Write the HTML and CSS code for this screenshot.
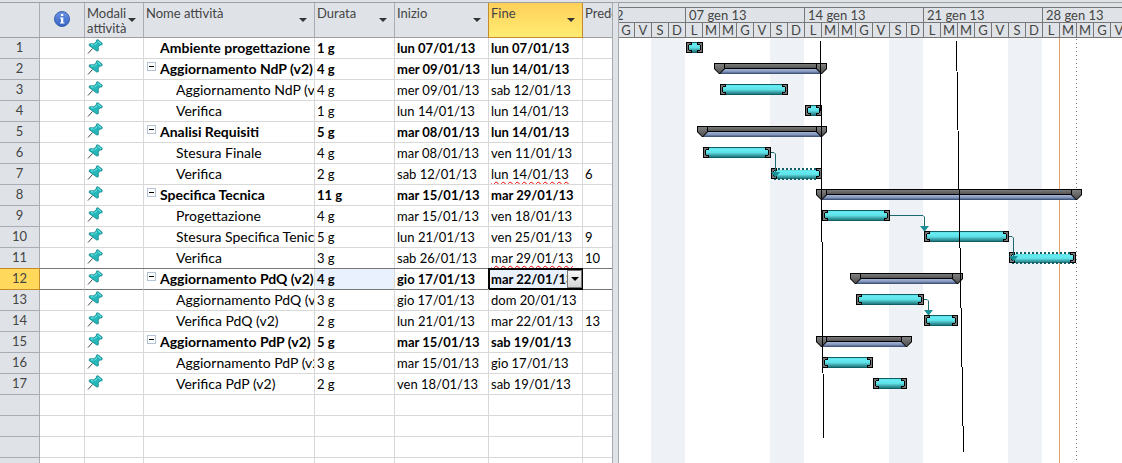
FILE: index.html
```
<!DOCTYPE html>
<html lang="it">
<head>
<meta charset="utf-8">
<title>Diagramma di Gantt</title>
<link rel="stylesheet" href="styles.css">
</head>
<body>
<svg class="defs" aria-hidden="true">
  <defs>
    <linearGradient id="teal" x1="0" y1="0" x2="0" y2="1">
      <stop offset="0" stop-color="#5fdbe2"/><stop offset=".2" stop-color="#66ecf2"/><stop offset=".5" stop-color="#5fe0e7"/><stop offset=".75" stop-color="#3ba5aa"/><stop offset="1" stop-color="#1c6e74"/>
    </linearGradient>
    <linearGradient id="blue" x1="0" y1="0" x2="0" y2="1">
      <stop offset="0" stop-color="#a3b5d6"/><stop offset=".5" stop-color="#8497bb"/><stop offset="1" stop-color="#34466c"/>
    </linearGradient>
    <linearGradient id="grey" x1="0" y1="0" x2="0" y2="1">
      <stop offset="0" stop-color="#808080"/><stop offset="1" stop-color="#505050"/>
    </linearGradient>
    <linearGradient id="info" x1="0" y1="0" x2="0" y2="1">
      <stop offset="0" stop-color="#6d95e4"/><stop offset="1" stop-color="#3562c4"/>
    </linearGradient>
    <symbol id="pin" viewBox="0 0 16 16">
      <path d="M1 14.5L5.5 9.5" stroke="#444" stroke-width="1" fill="none"/>
      <path d="M9.5 1L11 .8L15.2 4.2L15 5.8L13.2 6L11.2 8L11.4 11.5L10 12.2L2 6.4L2.6 4.8L6.8 4.8L9.2 3Z" fill="#25b7ba" stroke="#13868b" stroke-width=".8"/>
      <path d="M10.5 2L14 4.8M7.5 5.8L10 3.8M4 5.8L6.5 6" stroke="#7deeee" stroke-width="1" fill="none"/>
    </symbol>
    <g id="cap">
      <path d="M0 0H6V3H3V8H6V11H0Z" fill="#000"/>
      <path d="M1 1H5V2H3V3H2V8H3V9H5V10H1Z" fill="#777"/>
    </g>
    <g id="cap-end"><use href="#cap" transform="scale(-1 1)"/></g>
    <g id="wedge">
      <path d="M0 0H11V6L6 11H5L0 6Z" fill="#000"/>
      <path d="M1 1H10V5.500L6 10H5L1 5.500Z" fill="url(#grey)"/>
    </g>
    <path id="arrow" d="M-4 0H5L1 5H0Z" fill="#1a8f96" stroke="none"/>
    <pattern id="weekend" width="119" height="40" x="32" y="0" patternUnits="userSpaceOnUse">
      <rect width="34" height="40" fill="#eef2f7"/>
    </pattern>
  </defs>
</svg>
<main class="project">
  <section class="sheet" aria-label="Elenco attività">
    <table class="tasks">
      <colgroup><col class="c-id"><col class="c-info"><col class="c-mode"><col class="c-name"><col class="c-dur"><col class="c-date"><col class="c-date"><col class="c-pred"></colgroup>
      <thead>
        <tr>
          <th class="corner"></th>
          <th class="info"><svg class="info-icon" viewBox="0 0 16 16" role="img" aria-label="Indicatori"><circle cx="8" cy="8" r="7.500" fill="url(#info)" stroke="#3a5fae"/><path d="M7 3h2.300v2H7zM6 6.500h3.300v5H10.500v1H6v-1h1v-4H6z" fill="#fff"/></svg></th>
          <th>Modali attività<button class="filter" aria-label="Filtra modalità"></button></th>
          <th>Nome attività<button class="filter" aria-label="Filtra nome"></button></th>
          <th>Durata<button class="filter" aria-label="Filtra durata"></button></th>
          <th>Inizio<button class="filter" aria-label="Filtra inizio"></button></th>
          <th class="active">Fine<button class="filter" aria-label="Filtra fine"></button></th>
          <th>Predecessori</th>
        </tr>
      </thead>
      <tbody>
        <tr class="sum"><th>1</th><td></td><td><svg class="pin"><use href="#pin"/></svg></td><td class="l1">Ambiente progettazione</td><td>1 g</td><td>lun 07/01/13</td><td>lun 07/01/13</td><td></td></tr>
        <tr class="sum"><th>2</th><td></td><td><svg class="pin"><use href="#pin"/></svg></td><td class="l1"><button class="fold" aria-label="Comprimi"></button>Aggiornamento NdP (v2)</td><td>4 g</td><td>mer 09/01/13</td><td>lun 14/01/13</td><td></td></tr>
        <tr><th>3</th><td></td><td><svg class="pin"><use href="#pin"/></svg></td><td class="l2">Aggiornamento NdP (v2)</td><td>4 g</td><td>mer 09/01/13</td><td>sab 12/01/13</td><td></td></tr>
        <tr><th>4</th><td></td><td><svg class="pin"><use href="#pin"/></svg></td><td class="l2">Verifica</td><td>1 g</td><td>lun 14/01/13</td><td>lun 14/01/13</td><td></td></tr>
        <tr class="sum"><th>5</th><td></td><td><svg class="pin"><use href="#pin"/></svg></td><td class="l1"><button class="fold" aria-label="Comprimi"></button>Analisi Requisiti</td><td>5 g</td><td>mar 08/01/13</td><td>lun 14/01/13</td><td></td></tr>
        <tr><th>6</th><td></td><td><svg class="pin"><use href="#pin"/></svg></td><td class="l2">Stesura Finale</td><td>4 g</td><td>mar 08/01/13</td><td>ven 11/01/13</td><td></td></tr>
        <tr><th>7</th><td></td><td><svg class="pin"><use href="#pin"/></svg></td><td class="l2">Verifica</td><td>2 g</td><td>sab 12/01/13</td><td><span class="warn">lun 14/01/13</span></td><td>6</td></tr>
        <tr class="sum"><th>8</th><td></td><td><svg class="pin"><use href="#pin"/></svg></td><td class="l1"><button class="fold" aria-label="Comprimi"></button>Specifica Tecnica</td><td>11 g</td><td>mar 15/01/13</td><td>mar 29/01/13</td><td></td></tr>
        <tr><th>9</th><td></td><td><svg class="pin"><use href="#pin"/></svg></td><td class="l2">Progettazione</td><td>4 g</td><td>mar 15/01/13</td><td>ven 18/01/13</td><td></td></tr>
        <tr><th>10</th><td></td><td><svg class="pin"><use href="#pin"/></svg></td><td class="l2">Stesura Specifica Tenica</td><td>5 g</td><td>lun 21/01/13</td><td>ven 25/01/13</td><td>9</td></tr>
        <tr><th>11</th><td></td><td><svg class="pin"><use href="#pin"/></svg></td><td class="l2">Verifica</td><td>3 g</td><td>sab 26/01/13</td><td><span class="warn">mar 29/01/13</span></td><td>10</td></tr>
        <tr class="sum selected"><th>12</th><td></td><td><svg class="pin"><use href="#pin"/></svg></td><td class="l1"><button class="fold" aria-label="Comprimi"></button>Aggiornamento PdQ (v2)</td><td class="tint">4 g</td><td>gio 17/01/13</td><td class="tint cursor">mar 22/01/13<button class="drop" aria-label="Scegli data"></button></td><td></td></tr>
        <tr><th>13</th><td></td><td><svg class="pin"><use href="#pin"/></svg></td><td class="l2">Aggiornamento PdQ (v2)</td><td>3 g</td><td>gio 17/01/13</td><td>dom 20/01/13</td><td></td></tr>
        <tr><th>14</th><td></td><td><svg class="pin"><use href="#pin"/></svg></td><td class="l2">Verifica PdQ (v2)</td><td>2 g</td><td>lun 21/01/13</td><td>mar 22/01/13</td><td>13</td></tr>
        <tr class="sum"><th>15</th><td></td><td><svg class="pin"><use href="#pin"/></svg></td><td class="l1"><button class="fold" aria-label="Comprimi"></button>Aggiornamento PdP (v2)</td><td>5 g</td><td>mar 15/01/13</td><td>sab 19/01/13</td><td></td></tr>
        <tr><th>16</th><td></td><td><svg class="pin"><use href="#pin"/></svg></td><td class="l2">Aggiornamento PdP (v2)</td><td>3 g</td><td>mar 15/01/13</td><td>gio 17/01/13</td><td></td></tr>
        <tr><th>17</th><td></td><td><svg class="pin"><use href="#pin"/></svg></td><td class="l2">Verifica PdP (v2)</td><td>2 g</td><td>ven 18/01/13</td><td>sab 19/01/13</td><td></td></tr>
        <tr><th></th><td></td><td></td><td></td><td></td><td></td><td></td><td></td></tr>
        <tr><th></th><td></td><td></td><td></td><td></td><td></td><td></td><td></td></tr>
        <tr><th></th><td></td><td></td><td></td><td></td><td></td><td></td><td></td></tr>
        <tr><th></th><td></td><td></td><td></td><td></td><td></td><td></td><td></td></tr>
      </tbody>
    </table>
  </section>
  <div class="splitter" role="separator" aria-orientation="vertical"></div>
  <section class="gantt" aria-label="Diagramma di Gantt">
    <div class="timescale">
      <div class="week"><span class="label">31 dic 12</span><span>L</span><span>M</span><span>M</span><span>G</span><span>V</span><span>S</span><span>D</span></div>
      <div class="week"><span class="label">07 gen 13</span><span>L</span><span>M</span><span>M</span><span>G</span><span>V</span><span>S</span><span>D</span></div>
      <div class="week"><span class="label">14 gen 13</span><span>L</span><span>M</span><span>M</span><span>G</span><span>V</span><span>S</span><span>D</span></div>
      <div class="week"><span class="label">21 gen 13</span><span>L</span><span>M</span><span>M</span><span>G</span><span>V</span><span>S</span><span>D</span></div>
      <div class="week"><span class="label">28 gen 13</span><span>L</span><span>M</span><span>M</span><span>G</span><span>V</span><span>S</span><span>D</span></div>
    </div>
    <svg class="chart" role="img" aria-label="Barre delle attività">
      <rect width="100%" height="100%" fill="url(#weekend)"/>
      <path d="M440.500 0V2000" stroke="#e8a068"/>
      <path d="M457.500 1V2000" stroke="#777" stroke-dasharray="1 3"/>

      <!-- task bars -->
      <g fill="url(#teal)" stroke="#0e5f66">
        <rect x="69.500" y="4.500" width="13" height="10"/>
        <rect x="103.500" y="46.500" width="63" height="10"/>
        <rect x="188.500" y="67.500" width="13" height="10"/>
        <rect x="86.500" y="109.500" width="63" height="10"/>
        <rect x="205.500" y="172.500" width="63" height="10"/>
        <rect x="307.500" y="193.500" width="80" height="10"/>
        <rect x="239.500" y="256.500" width="63" height="10"/>
        <rect x="307.500" y="277.500" width="29" height="10"/>
        <rect x="205.500" y="319.500" width="46" height="10"/>
        <rect x="256.500" y="340.500" width="29" height="10"/>
      </g>
      <g>
        <rect x="154" y="132" width="46" height="9" fill="url(#teal)"/>
        <rect x="392" y="216" width="63" height="9" fill="url(#teal)"/>
        <path d="M155 131H199M155 141H199M393 215H455M393 225H455" stroke="#0e5f66" stroke-width="2" stroke-dasharray="2 2"/>
      </g>
      <use href="#cap" x="67" y="4"/><use href="#cap-end" x="84" y="4"/>
      <use href="#cap" x="101" y="46"/><use href="#cap-end" x="169" y="46"/>
      <use href="#cap" x="186" y="67"/><use href="#cap-end" x="203" y="67"/>
      <use href="#cap" x="84" y="109"/><use href="#cap-end" x="152" y="109"/>
      <use href="#cap" x="152" y="130"/><use href="#cap-end" x="203" y="130"/>
      <use href="#cap" x="203" y="172"/><use href="#cap-end" x="271" y="172"/>
      <use href="#cap" x="305" y="193"/><use href="#cap-end" x="390" y="193"/>
      <use href="#cap" x="390" y="214"/><use href="#cap-end" x="457" y="214"/>
      <use href="#cap" x="237" y="256"/><use href="#cap-end" x="305" y="256"/>
      <use href="#cap" x="305" y="277"/><use href="#cap-end" x="339" y="277"/>
      <use href="#cap" x="203" y="319"/><use href="#cap-end" x="254" y="319"/>
      <use href="#cap" x="254" y="340"/><use href="#cap-end" x="288" y="340"/>

      <!-- summary bars -->
      <g fill="url(#blue)">
        <rect x="101" y="31" width="101" height="5"/><rect x="84" y="94" width="118" height="5"/><rect x="203" y="157" width="254" height="5"/><rect x="237" y="241" width="101" height="5"/><rect x="203" y="304" width="84" height="5"/>
      </g>
      <g fill="url(#grey)" stroke="#000">
        <rect x="95.500" y="25.500" width="111" height="5"/><rect x="78.500" y="88.500" width="128" height="5"/><rect x="197.500" y="151.500" width="264" height="5"/><rect x="231.500" y="235.500" width="111" height="5"/><rect x="197.500" y="298.500" width="94" height="5"/>
      </g>
      <use href="#wedge" x="95" y="25"/><use href="#wedge" x="197" y="25"/>
      <use href="#wedge" x="78" y="88"/><use href="#wedge" x="197" y="88"/>
      <use href="#wedge" x="197" y="151"/><use href="#wedge" x="452" y="151"/>
      <use href="#wedge" x="231" y="235"/><use href="#wedge" x="333" y="235"/>
      <use href="#wedge" x="197" y="298"/><use href="#wedge" x="282" y="298"/>

      <!-- dependency links -->
      <g fill="none" stroke="#1a6a70">
        <path d="M152 114.500H155L156.500 116V135"/>
        <path d="M271 177.500H304L305.500 179V189"/>
        <path d="M390 198.500H393L394.500 200V219"/>
        <path d="M305 261.500H308L309.500 263V273"/>
      </g>
      <use href="#arrow" x="156" y="134"/><use href="#arrow" x="305" y="188"/><use href="#arrow" x="394" y="218"/><use href="#arrow" x="309" y="272"/>

      <!-- milestone lines -->
      <g class="crisp" stroke="#000">
        <path d="M201.480 3L204.500 400"/>
        <path d="M337.500 3L344.460 414"/>
      </g>
    </svg>
  </section>
</main>
</body>
</html>
```
FILE: styles.css
```
* { box-sizing: border-box; }
body {
  margin: 0;
  background: #fff;
  color: #000;
  font: 13px/20px Lato, "Open Sans", sans-serif;
}
button { padding: 0; border: 0; background: none; }
.defs { position: absolute; width: 0; height: 0; }
.project {
  display: flex;
  height: 100vh;
  overflow: hidden;
  padding-top: 2px;
  background: #dfe3e8;
}
.sheet {
  flex: 0 0 612px;
  overflow: hidden;
  border-top: 1px solid #a0a0a0;
  background: #fff;
}
.splitter {
  flex: 0 0 7px;
  border: 1px solid #a6a9ad;
  border-width: 1px 1px 0;
  background: #dfe3e8;
}
.gantt {
  flex: 1;
  display: flex;
  flex-direction: column;
  min-width: 0;
  overflow: hidden;
  border-top: 1px solid #a0a0a0;
}

/* task table */
.tasks {
  width: 672px;
  table-layout: fixed;
  border-collapse: separate;
  border-spacing: 0;
}
.c-id { width: 40px; }
.c-info { width: 45px; }
.c-mode { width: 59px; }
.c-name { width: 171px; }
.c-dur { width: 80px; }
.c-date { width: 94px; }
.c-pred { width: 89px; }
.tasks thead th {
  position: relative;
  height: 35px;
  padding: 3px 2px 0;
  border-right: 1px solid #a9acb2;
  border-bottom: 1px solid #a0a0a0;
  background: #dfe3e8;
  color: #444;
  font-weight: 400;
  line-height: 15px;
  text-align: left;
  vertical-align: top;
}
.tasks thead .info { padding: 8px 0 0; text-align: center; }
.info-icon { width: 16px; height: 16px; }
.tasks thead .active {
  background: linear-gradient(#ffd05a, #ffec72);
  border-color: #c58a2c;
  box-shadow: -1px 0 #c58a2c;
}
.filter {
  position: absolute;
  right: 7px;
  bottom: 15px;
  border: 4px solid transparent;
  border-top-color: #333;
  border-bottom: 0;
}
.tasks td, .tasks tbody th {
  height: 21px;
  padding: 0 2px;
  border-right: 1px solid #d8d8d8;
  border-bottom: 1px solid #d8d8d8;
  overflow: hidden;
  white-space: nowrap;
}
.tasks tbody th {
  padding-bottom: 2px;
  border-color: #a9acb2;
  background: #dfe3e8;
  color: #444;
  font-weight: 400;
  line-height: 18px;
}
.sum td { font-weight: 700; }
.pin { display: block; width: 16px; height: 16px; margin-bottom: 2px; }
.tasks .l1, .tasks .l2 { font-size: 14px; }
.tasks .l1 { position: relative; padding-left: 16px; padding-right: 0; }
.tasks .l2 { padding-left: 32px; }
.fold {
  position: absolute;
  left: 3px;
  top: 3px;
  width: 9px;
  height: 9px;
  border: 1px solid #b4c3d6;
  background: linear-gradient(#000, #000) center / 5px 1px no-repeat #fff;
}
.warn { text-decoration: underline wavy #e00 1px; text-underline-offset: 2px; }
.tasks .selected td { border-bottom-color: #777; box-shadow: 0 -1px #777; }
.tasks .selected th {
  border-color: #c58a2c;
  background: #ffd85c;
  box-shadow: 0 -1px #c58a2c;
}
.selected .tint { background: #e8f1fd; }
.tasks .selected .cursor {
  position: relative;
  border-color: #000;
  box-shadow: inset 0 0 0 1px #000, -1px -1px #000, 0 -1px #000;
}
.drop {
  position: absolute;
  right: 0;
  top: 1px;
  width: 15px;
  height: 18px;
  border: 1px solid #777;
  background: linear-gradient(#f6f6f6, #d5d5d5);
}
.drop::before {
  content: "";
  display: block;
  width: 0;
  margin: auto;
  border: 4px solid transparent;
  border-top-color: #000;
  border-bottom: 0;
}

/* time scale and chart */
.timescale {
  display: flex;
  margin: 4px 0 0 -52px;
  border-top: 1px solid #777;
}
.week {
  flex: 0 0 119px;
  display: grid;
  grid-template-columns: repeat(7, 17px);
  color: #444;
}
.week span {
  height: 15px;
  border-right: 1px solid #777;
  border-bottom: 1px solid #777;
  line-height: 14px;
  text-align: center;
}
.week .label {
  grid-column: 1 / -1;
  padding-left: 3px;
  text-align: left;
}
.chart {
  flex: 1;
  width: 100%;
  min-height: 0;
  background: #fff;
}
.crisp { shape-rendering: crispEdges; }
```
